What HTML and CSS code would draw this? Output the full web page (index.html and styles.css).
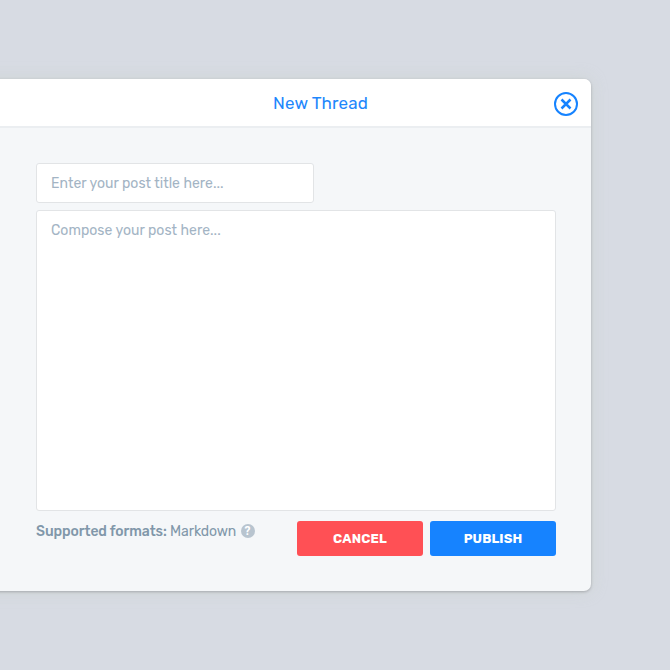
FILE: index.html
```html
<!DOCTYPE html>
<html lang="en">
<head>
<meta charset="utf-8">
<title>New Thread</title>
<link rel="stylesheet" href="styles.css">
</head>
<body>
<main class="modal">
  <header class="modal-header">
    <h1 class="title"><span>New Thread</span></h1>
    <button class="close" aria-label="Close"><svg width="24" height="24" viewBox="0 0 24 24" fill="none" stroke="currentColor" stroke-width="2"><circle cx="12" cy="12" r="11"/><path d="M7.5 7.5l9 9M16.5 7.5l-9 9" stroke-width="2.5"/></svg></button>
  </header>
  <form class="form">
    <div class="field field-title"><span>Enter your post title here...</span></div>
    <div class="field field-body"><span>Compose your post here...</span></div>
    <footer class="footer">
      <p class="formats"><span><b>Supported formats:</b> Markdown</span><i class="help">?</i></p>
      <div class="actions">
        <button type="button" class="btn cancel"><span>CANCEL</span></button>
        <button type="button" class="btn publish"><span>PUBLISH</span></button>
      </div>
    </footer>
  </form>
</main>
</body>
</html>
```
FILE: styles.css
```css
* { box-sizing: border-box; }
body { margin: 0; height: 670px; padding-top: 79px; overflow: hidden; background: #d7dbe3; font-family: Rubik, Roboto, sans-serif; }
.modal { width: 641px; margin-left: -50px; height: 512px; background: #f5f7f9; border-radius: 7px; box-shadow: 0 1px 3px rgba(0,0,0,.22), 0 0 16px rgba(195,205,190,.4); overflow: hidden; }
.modal-header { height: 49px; display: flex; align-items: center; background: #fff; border-bottom: 2px solid #ebeef1; padding: 2px 13px 0 323px; justify-content: space-between; }
.title { margin: -1px 0 0; font-size: 17px; font-weight: 400; color: #1e87fc; letter-spacing: .18px; }
.close { width: 24px; height: 24px; padding: 0; border: 0; background: none; color: #1683ff; display: flex; margin-top: 1px; }
.form { padding: 35px 35px 0 86px; }
.field { background: #fff; border: 1px solid #e2e4e6; border-radius: 3px; padding: 11px 14px; font-size: 14px; line-height: 17px; color: #a3b4c4; letter-spacing: .03px; }
.field-title { width: 278px; height: 40px; }
.field-body { height: 301px; margin-top: 7px; }
.footer { display: flex; justify-content: space-between; margin-top: 10px; }
.formats { margin: 0; display: flex; height: 20px; align-items: center; font-size: 14px; letter-spacing: -.09px; color: #8197aa; }
.formats b { font-weight: 500; }
.help { width: 14px; height: 14px; margin-left: 4.3px; border-radius: 50%; background: #b8c4cf; color: #fff; font: bold 12px/14px Roboto, sans-serif; text-align: center; }
.actions { display: flex; gap: 7px; }
.btn { width: 126px; height: 35px; padding: 0; border: 0; border-radius: 3px; color: #fff; font: 700 13px Rubik, Roboto, sans-serif; letter-spacing: .15px; }
.cancel { background: #ff5055; }
.publish { background: #1683ff; }
```
